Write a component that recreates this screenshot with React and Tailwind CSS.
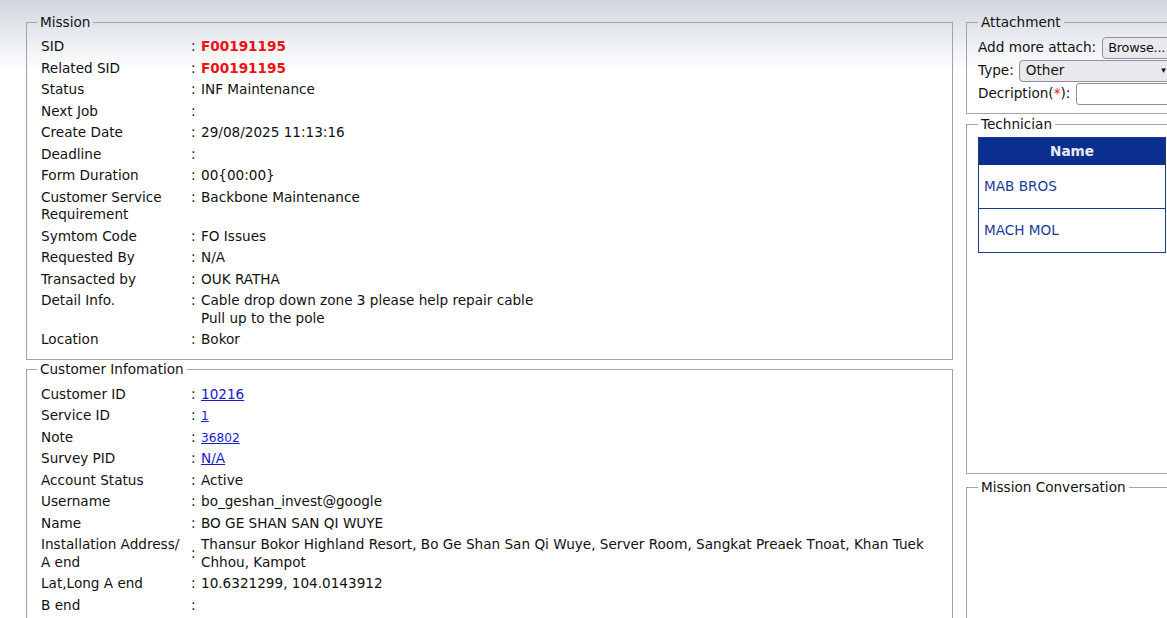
import React from "react";

const mission = [
  { label: "SID", value: "F00191195", red: true },
  { label: "Related SID", value: "F00191195", red: true },
  { label: "Status", value: "INF Maintenance" },
  { label: "Next Job", value: "" },
  { label: "Create Date", value: "29/08/2025 11:13:16" },
  { label: "Deadline", value: "" },
  { label: "Form Duration", value: "00{00:00}" },
  { label: "Customer Service Requirement", value: "Backbone Maintenance" },
  { label: "Symtom Code", value: "FO Issues" },
  { label: "Requested By", value: "N/A" },
  { label: "Transacted by", value: "OUK RATHA" },
  { label: "Detail Info.", value: ["Cable drop down zone 3 please help repair cable", "Pull up to the pole"] },
  { label: "Location", value: "Bokor" },
];

const customer = [
  { label: "Customer ID", value: "10216", link: true },
  { label: "Service ID", value: "1", link: true, small: true },
  { label: "Note", value: "36802", link: true, small: true },
  { label: "Survey PID", value: "N/A", link: true },
  { label: "Account Status", value: "Active" },
  { label: "Username", value: "bo_geshan_invest@google" },
  { label: "Name", value: "BO GE SHAN SAN QI WUYE" },
  {
    label: "Installation Address/ A end",
    value: "Thansur Bokor Highland Resort, Bo Ge Shan San Qi Wuye, Server Room, Sangkat Preaek Tnoat, Khan Tuek Chhou, Kampot",
  },
  { label: "Lat,Long A end", value: "10.6321299, 104.0143912" },
  { label: "B end", value: "" },
];

const Row = ({ row, middle }) => (
  <div className={`flex py-[2px] leading-[17.5px] ${middle ? "items-center" : "items-start"}`}>
    <div className="w-[154px] shrink-0 pl-[4px] pr-[6px]">{row.label}</div>
    <div className="w-[10px] shrink-0">:</div>
    <div className="flex-1 h-full">
      {Array.isArray(row.value) ? (
        row.value.map(v => <div key={v}>{v}</div>)
      ) : row.red ? (
        <span className="font-bold text-[#ee1111]">{row.value}</span>
      ) : row.link ? (
        <a href="#" className={`text-[#1a1ad0] underline ${row.small ? "text-[12.2px] leading-[12px]" : ""}`}>{row.value}</a>
      ) : (
        row.value
      )}
    </div>
  </div>
);

const Box = ({ title, className = "", children }) => (
  <fieldset className={`border border-[#a3a3a3] ${className}`}>
    <legend className="px-[3px] leading-[17px]">{title}</legend>
    {children}
  </fieldset>
);

export default function App() {
  return (
    <div
      className="w-[1167px] h-[618px] overflow-hidden text-[13.6px] text-[#111] bg-[linear-gradient(to_bottom,#d1d7df_0px,#ffffff_72px)]"
      style={{ fontFamily: '"DejaVu Sans", Verdana, sans-serif' }}
    >
      <div className="flex gap-[13px] pl-[26px] pt-[14px]">
        <div className="w-[927px] shrink-0 flex flex-col gap-[1px]">
          <Box title="Mission" className="px-[10px] pt-[5px] pb-[8px]">
            {mission.map(r => (
              <Row key={r.label} row={r} />
            ))}
          </Box>
          <Box title="Customer Infomation" className="px-[10px] pt-[6px] pb-[9px]">
            {customer.map(r => (
              <Row key={r.label} row={r} middle />
            ))}
          </Box>
        </div>

        <div className="w-[240px] shrink-0 flex flex-col">
          <Box title="Attachment" className="pl-[11px] pt-[5px] pb-[8px]">
            <div className="flex items-center h-[23px] whitespace-nowrap">
              <span>Add more attach:</span>
              <span className="ml-[6px] h-[22px] pl-[5px] pr-[8px] flex items-center border border-[#8f8f9d] rounded-[4px] bg-[#e9e9ed] text-[12.8px] tracking-[-0.2px]">
                Browse...
              </span>
            </div>
            <div className="flex items-center h-[23px] whitespace-nowrap">
              <span>Type:</span>
              <span className="relative ml-[5px] h-[22px] w-[152px] px-[6px] flex items-center border border-[#8f8f9d] rounded-[4px] bg-[#e9e9ed]">
                Other
                <span className="absolute right-[4px] top-[3px] text-[9px]">▾</span>
              </span>
            </div>
            <div className="flex items-center h-[23px] whitespace-nowrap">
              <span>
                Decription(<span className="text-[#ee1111]">*</span>):
              </span>
              <span className="ml-[6px] h-[22px] w-[120px] border border-[#8f8f9d] rounded-[3px] bg-white" />
            </div>
          </Box>

          <Box title="Technician" className="mt-[2px] pl-[11px] pt-[4px] h-[358px]">
            <div className="w-[188px] border border-[#183a8c] text-[#1b3c98]">
              <div className="h-[27px] bg-[#0b2f8f] text-[#e8ecf7] font-bold flex items-center justify-center">Name</div>
              <div className="h-[44px] flex items-center pl-[5px] border-b border-[#183a8c]">MAB BROS</div>
              <div className="h-[43px] flex items-center pl-[5px]">MACH MOL</div>
            </div>
          </Box>

          <Box title="Mission Conversation" className="mt-[5px] pl-[11px] h-[200px]" />
        </div>
      </div>
    </div>
  );
}
